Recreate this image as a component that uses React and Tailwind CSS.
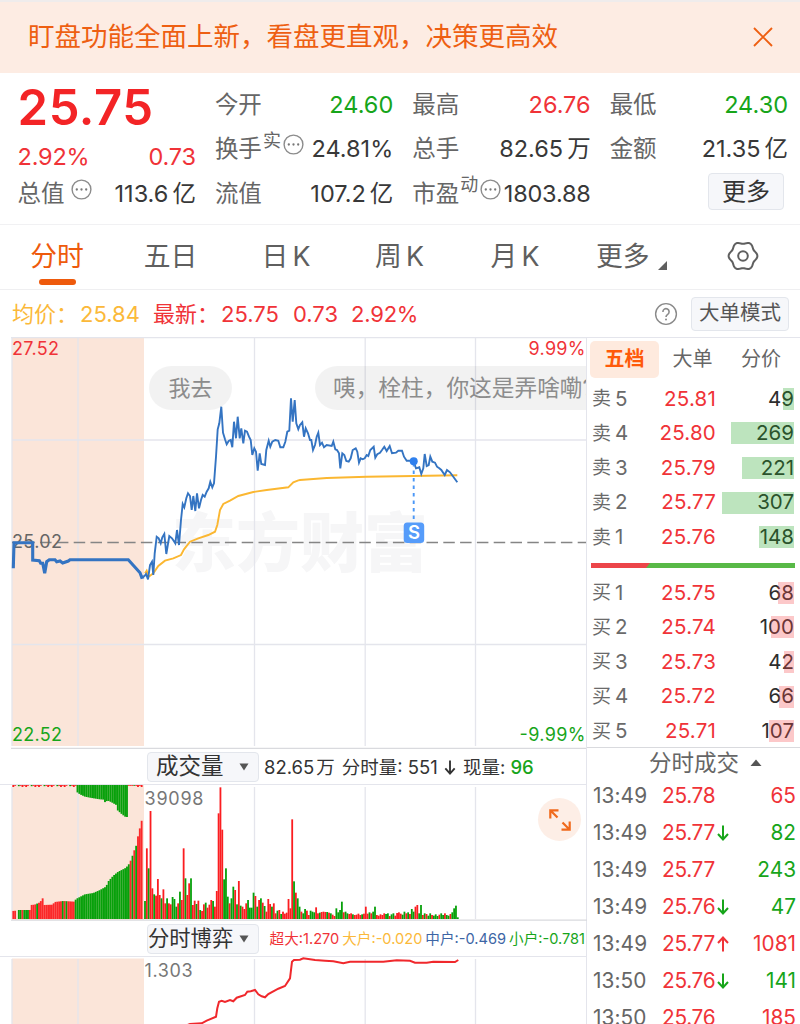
import React from "react";

const FONT = "font-['Inter','Noto_Sans_CJK_SC',sans-serif]";

/* ---------- chart data (chart-space pixels) ---------- */

const scale = (pts, ox, oy) => pts.map(([x, y]) => [ox + x / 3, oy + y / 3]);
const line = (pts) => pts.map(([x, y]) => `${x.toFixed(1)},${y.toFixed(1)}`).join(" ");

const auction = scale(
  [[40,415],[42,338],[98,338],[98,390],[118,392],[122,400],[128,400],[134,430],[140,395],[148,389],[165,389],[170,395],[180,393],[188,399],[205,393],[210,389],[385,389],[420,428],[425,442],[432,440]],
  0, 430
);

const price = [
  ...scale(
    [[432,440],[438,432],[444,448],[450,405],[456,395],[460,435],[464,370],[470,320],[476,325],[482,340],[487,322],[493,312],[499,372],[508,318],[516,325],[526,340],[531,300],[537,345],[543,270],[548,222],[553,232],[559,205],[564,190],[570,198],[575,240],[580,198],[586,243],[591,190],[597,235],[603,210],[608,195],[614,200],[620,185],[626,175],[631,155],[637,172],[642,160]],
    0, 430
  ),
  ...scale(
    [[48,200],[53,118],[58,100],[64,50],[69,128],[75,148],[80,163],[86,153],[92,150],[97,172],[102,95],[108,145],[113,80],[119,145],[124,115],[130,160],[135,122],[141,125],[147,140],[152,150],[157,195],[163,175],[168,185],[173,242],[179,190],[184,222],[195,225],[199,180],[206,152],[211,170],[217,155],[226,150],[235,152],[241,172],[250,172],[256,155],[262,125],[268,122],[273,25],[278,95],[284,30],[289,100],[295,118],[300,105],[307,97],[312,140],[317,115],[324,130],[330,150],[334,150],[339,180],[345,165],[350,140],[355,128],[360,165],[366,158],[372,172],[380,165],[395,168],[400,155],[406,178],[411,180],[417,190],[421,235],[427,190],[433,195],[439,213],[446,215],[452,205],[458,180],[467,175],[472,185],[477,218],[482,205],[488,208],[494,205],[500,195],[505,198],[511,180],[521,170],[526,203],[532,193],[540,188],[546,180],[553,170],[560,183],[569,168],[576,190],[588,188],[595,182],[606,182],[612,200],[620,212],[640,212],[648,235],[658,232],[664,252],[670,235],[674,192],[680,228],[686,225],[691,200],[697,215],[705,218],[711,230],[718,235],[724,240],[734,255],[741,240],[750,247],[760,260],[772,277]],
    200, 390
  ),
];

const average = [
  ...scale(
    [[435,430],[440,422],[446,440],[460,430],[475,408],[495,392],[520,385],[543,375],[552,358],[570,335],[595,325],[625,315],[645,305],[652,285],[660,240],[670,222],[690,212],[715,198],[760,186],[800,180],[865,172],[880,157],[895,151]],
    0, 430
  ),
  ...scale([[0,150],[80,144],[200,140],[340,138],[472,136]], 300, 430),
];

const game = [
  ...scale(
    [[560,826],[570,822],[605,820],[620,812],[648,800],[652,775],[657,755],[665,752],[675,756],[690,750],[700,754],[710,743],[735,735],[742,725],[752,724],[765,720],[775,733],[785,739],[795,742],[805,732],[835,716],[855,708],[870,685],[876,635],[882,630],[900,629]],
    0, 750
  ),
  ...scale([[10,625],[45,630],[75,632],[100,634],[130,640],[150,635],[250,635],[290,631],[330,632],[345,638],[380,638],[400,635],[465,636],[475,630]], 300, 750),
];

/* per-minute volume: bar height in thirds of a pixel plus direction */
const volume =
  "54G 212R 152G 324R 92R 74G 70R 120R 72R 62G 89R 47R 62G 47R 44R 66G 60G 37G 47R 82G 57R 212R 122G 72R 107R 122G 42R 55R 45G 55R 27G 24R 44R 49G 34R 43R 57R 54G 37R 84R 317R 395R 268R 119G 152G 67G 47R 62G 97G 87R 44G 114R 40G 37R 30R 47R 57G 34G 34G 79G 69R 37G 57R 62G 49R 39G 22R 60R 45R 37G 47R 17R 25G 27R 15G 22R 16R 19R 60R 32R 299R 113G 79R 62G 37G 22R 17G 30G 25R 12R 25G 22G 20G 35R 17R 19G 21R 22R 21R 21G 19R 17G 13R 9R 32G 20G 27G 52G 20R 22G 17G 15R 17R 14G 12R 13R 16R 12R 14G 16R 37R 16R 20G 17R 22G 37G 12R 10R 14R 12R 17R 15G 17G 9R 14G 17G 10R 18R 20R 16R 13G 22G 17R 20G 15R 30G 22G 37R 42R 17G 42G 12R 17G 15R 10G 17G 12R 10G 14G 9G 13R 17G 12G 17R 12G 10G 15R 20G 32G 40G 5G"
    .split(" ")
    .map((s) => [parseInt(s, 10) / 3, s.endsWith("R")]);

const lerp = (stops, x) => {
  for (let i = 1; i < stops.length; i++) {
    const [x0, y0] = stops[i - 1];
    const [x1, y1] = stops[i];
    if (x <= x1) return y0 + ((y1 - y0) * (x - x0)) / (x1 - x0);
  }
  return stops[stops.length - 1][1];
};
const lowerEnvelope = [[37,24],[49,25],[54,27],[90,27],[92,42],[104,43],[120,50],[128,62],[132,42],[158,43],[164,51],[190,54],[224,52],[228,60],[255,74],[280,78],[300,87],[318,97],[326,114],[340,130],[355,142],[375,152],[384,160],[390,170],[396,185],[402,204],[408,217],[414,248],[420,274],[427,303]];
const upperEnvelope = [[232,22],[240,28],[255,35],[275,39],[300,43],[313,44],[316,55],[322,46],[335,52],[349,60],[353,76],[365,87],[375,95],[381,96]];
const auctionBars = Array.from({ length: 71 }, (_, i) => {
  const x = 40 + i * 5.5;
  const red =
    x < 50 || (x > 54 && x < 90 && i % 4 === 1) || (x > 90 && x < 104) || (x > 104 && x < 122 && i % 2 === 0) ||
    (x >= 122 && x < 182) || (x >= 182 && x < 207 && i % 2 === 0) || (x >= 207 && x < 226) || (x > 381 && i % 2 === 0) || x > 416;
  return { x: x / 3, h: x > 49 && x < 54 ? 0 : lerp(lowerEnvelope, x) / 3, red };
});

const RED = "#fb1d20";
const GREEN = "#07a00a";

/* ---------- small pieces ---------- */

const Dots = () => (
  <svg className="size-[21px] shrink-0" viewBox="0 0 21 21">
    <circle cx="10.5" cy="10.5" r="9.4" fill="none" stroke="#8c8c8c" strokeWidth="1.4" />
    <circle cx="5.8" cy="10.5" r="1.15" fill="#777" />
    <circle cx="10.5" cy="10.5" r="1.15" fill="#777" />
    <circle cx="15.2" cy="10.5" r="1.15" fill="#777" />
  </svg>
);

function Stat({ label, sup, dots, value, unit, tone = "text-[#383838]" }) {
  return (
    <div className="flex h-[44.5px] items-center justify-between whitespace-nowrap">
      <span className="flex items-center text-[23.5px] text-[#666]">
        {label}
        {sup && <span className="mb-4 ml-px text-[18px] leading-none">{sup}</span>}
        {dots && <span className={sup ? "mb-2 ml-[2px]" : "mb-2 ml-[6px]"}><Dots /></span>}
      </span>
      <span className={`flex items-center text-[23.5px] ${tone}`}>
        {value}
        {unit && <span className="ml-[4px]">{unit}</span>}
      </span>
    </div>
  );
}

const gearPath =
  Array.from({ length: 72 }, (_, i) => {
    const a = (i * Math.PI) / 36;
    const r = 13.3 + 1.1 * Math.cos(6 * a);
    return `${i ? "L" : "M"}${(16 + r * Math.cos(a)).toFixed(2)} ${(16 + r * Math.sin(a)).toFixed(2)}`;
  }).join("") + "Z";

const sells = [["卖5", "25.81", 49], ["卖4", "25.80", 269], ["卖3", "25.79", 221], ["卖2", "25.77", 307], ["卖1", "25.76", 148]];
const buys = [["买1", "25.75", 68], ["买2", "25.74", 100], ["买3", "25.73", 42], ["买4", "25.72", 66], ["买5", "25.71", 107]];
const trades = [
  ["13:49", "25.78", "", "65", "r"],
  ["13:49", "25.77", "d", "82", "g"],
  ["13:49", "25.77", "", "243", "g"],
  ["13:49", "25.76", "d", "47", "g"],
  ["13:49", "25.77", "u", "1081", "r"],
  ["13:50", "25.76", "d", "141", "g"],
  ["13:50", "25.76", "", "185", "r"],
];

function Level({ row, bar }) {
  const [label, p, v] = row;
  return (
    <div className="flex h-[34.6px] items-center pl-[5px] pr-[6px] pt-px text-[20.5px] leading-none">
      <span className="flex w-[50px] items-center gap-[4px] text-[#6a6a6a]">
        <span className="text-[19px]">{label[0]}</span>
        {label[1]}
      </span>
      <span className="w-[74px] text-right tracking-[0.2px] text-[#f03338]">{p}</span>
      <span className="relative flex h-[22px] flex-1 items-center justify-end text-[#2e2e2e]">
        {v}
        <span className={`absolute right-0 top-0 h-full ${bar}`} style={{ width: v * 0.235 }} />
      </span>
    </div>
  );
}

function Arrow({ up, className }) {
  return (
    <svg className={className} viewBox="0 0 12 16" fill="none" stroke="currentColor" strokeWidth="2">
      <path d={up ? "M6 15.5V1.5M1 7L6 1.5L11 7" : "M6 0.5V14.5M1 9L6 14.5L11 9"} />
    </svg>
  );
}

function Picker({ children, className }) {
  return (
    <div className={`flex h-[30px] w-[112px] shrink-0 items-center justify-between rounded-[4px] border border-[#e3e6ec] bg-[#f6f7fa] pr-[9px] leading-none text-[#333] ${className}`}>
      <span className="whitespace-nowrap">{children}</span>
      <svg className="h-[8px] w-[10px] shrink-0" viewBox="0 0 10 8"><path d="M0.5 0.5H9.5L5 7.5Z" fill="#555" /></svg>
    </div>
  );
}

const Verticals = ({ y1, y2 }) => (
  <g stroke="#e4e5ec" strokeWidth="1.3">
    {[12, 78, 254.5, 365.2, 475.5].map((x) => <line key={x} x1={x} x2={x} y1={y1} y2={y2} />)}
  </g>
);

/* ---------- page ---------- */

function PriceChart() {
  return (
    <div className="relative h-[412px] overflow-hidden">
      <svg className="block h-[412px] w-[587px]" viewBox="0 337 587 412">
        <rect x="12" y="338" width="132" height="408" fill="#fbe5d9" />
        <text x="172" y="566" fontSize="64" fontWeight="900" fill="#f6f6f7" fontFamily="Noto Sans CJK SC, sans-serif">东方财富</text>
        <Verticals y1={338} y2={746} />
        <g stroke="#e4e5ec" strokeWidth="1.3">
          <line x1="11" x2="587" y1="337.5" y2="337.5" />
          <line x1="12" x2="586" y1="440" y2="440" />
          <line x1="12" x2="586" y1="644.5" y2="644.5" />
        </g>
        <line x1="11" x2="587" y1="748.3" y2="748.3" stroke="#d9dade" strokeWidth="1.3" />
        <line x1="12" x2="586" y1="542.5" y2="542.5" stroke="#858585" strokeWidth="1.3" strokeDasharray="11.5 5.3" strokeDashoffset="5.5" />
        <g fontFamily="Inter, sans-serif" fontSize="18">
          <text x="12" y="354.5" fill="#f03338" textLength="47">27.52</text>
          <text x="12" y="548" fill="#666" textLength="50">25.02</text>
          <text x="12" y="741" fill="#17a51a" textLength="50">22.52</text>
          <text x="585.5" y="354.5" fill="#f03338" textAnchor="end" textLength="57">9.99%</text>
          <text x="585.5" y="741" fill="#17a51a" textAnchor="end" textLength="66">-9.99%</text>
        </g>
        <polyline points={line(average)} fill="none" stroke="#fbb731" strokeWidth="1.9" />
        <polyline points={line(auction)} fill="none" stroke="#3474c2" strokeWidth="3.1" />
        <polyline points={line(price)} fill="none" stroke="#3474c2" strokeWidth="1.9" />
        <line x1="413.7" x2="413.7" y1="463" y2="522" stroke="#4a97f7" strokeWidth="1.9" strokeDasharray="3.5 4" />
        <circle cx="413.7" cy="461.3" r="4" fill="#2f80ee" />
        <rect x="403.7" y="522.5" width="20.5" height="20.5" rx="3.5" fill="#569cfa" />
        <text x="413.9" y="539.4" fontFamily="Inter, sans-serif" fontSize="18.5" fontWeight="600" fill="#fff" textAnchor="middle">S</text>
      </svg>
      <div className="absolute left-[149px] top-[29px] flex h-[44px] w-[83px] items-center justify-center rounded-full bg-black/5 text-[22px] text-[#8c8c8c]">我去</div>
      <div className="absolute left-[315px] top-[29px] flex h-[44px] w-[320px] items-center whitespace-nowrap rounded-full bg-black/5 pl-[18px] text-[22.7px] text-[#8c8c8c]">咦，栓柱，你这是弄啥嘞?</div>
    </div>
  );
}

function VolumeChart() {
  return (
    <div className="relative h-[136px]">
      <svg className="block h-[136px] w-[587px]" viewBox="0 785 587 136">
        <rect x="12" y="785" width="132" height="135" fill="#fbe5d9" />
        <Verticals y1={787} y2={919} />
        {auctionBars.map((b) => (
          <rect key={b.x} x={b.x - 0.95} y={919 - b.h} width="1.86" height={b.h} fill={b.red ? RED : GREEN} fillOpacity={b.red ? 0.95 : 1} />
        ))}
        {auctionBars.map((b, i) => {
          const cx = b.x * 3;
          if (cx >= 232 && cx <= 383) return <rect key={i} x={b.x - 0.95} y="785" width="1.86" height={lerp(upperEnvelope, cx) / 3} fill={GREEN} />;
          const h = [2, 0.8, 0, 1.2, 0.8, 2, 0.8][i % 7];
          return <rect key={i} x={b.x - 0.95} y="785" width="1.86" height={cx > 383 && cx < 412 ? 0.8 : h} fill={i % 7 === 3 ? GREEN : RED} />;
        })}
        {volume.map(([h, red], i) => (
          <rect key={i} x={144.1 + i * 1.84} y={919 - h} width="1.8" height={h} fill={red ? RED : GREEN} />
        ))}
        <line x1="11" x2="587" y1="920.2" y2="920.2" stroke="#d9dade" strokeWidth="1.3" />
        <text x="144.5" y="805" fontFamily="Inter, sans-serif" fontSize="18" fill="#777" textLength="59">39098</text>
      </svg>
      <div className="absolute left-[538px] top-[13px] flex size-[43px] items-center justify-center rounded-full bg-[#fdeee6]">
        <svg className="size-[24px]" viewBox="0 0 24 24" fill="none" stroke="#f06a1d" strokeWidth="2.2">
          <path d="M10.5 2.3H2.3V10.5M2.3 2.3L9.5 9.5M13.5 21.7H21.7V13.5M21.7 21.7L14.5 14.5" />
        </svg>
      </div>
    </div>
  );
}

export default function App() {
  return (
    <div className={`flex h-[1024px] w-[800px] flex-col overflow-hidden bg-white ${FONT}`}>
      <div className="flex h-[73px] shrink-0 items-center justify-between border-t-2 border-[#efecec] bg-[#fdece3] pb-[2px] pl-[28px] pr-[27px] text-[#ee5f12]">
        <span className="text-[26.5px] leading-none">盯盘功能全面上新，看盘更直观，决策更高效</span>
        <svg className="size-[20px]" viewBox="0 0 20 20" fill="none" stroke="currentColor" strokeWidth="1.9"><path d="M1 1L19 19M19 1L1 19" /></svg>
      </div>

      <div className="grid h-[152px] shrink-0 grid-cols-4 gap-x-[19px] border-b border-[#f1f1f3] pl-[17.5px] pr-[12px] pt-[9px]">
        <div className="flex flex-col">
          <div className="flex h-[51px] items-center text-[49px] font-semibold leading-none tracking-[0.6px] text-[#f32426]">25.75</div>
          <div className="flex h-[38px] items-center justify-between pt-[9px] text-[23.5px] leading-none tracking-[-0.2px] text-[#f03338]">
            <span>2.92%</span>
            <span>0.73</span>
          </div>
          <Stat label="总值" dots value="113.6" unit="亿" />
        </div>
        <div>
          <Stat label="今开" value="24.60" tone="text-[#17a51a]" />
          <Stat label="换手" sup="实" dots value="24.81%" />
          <Stat label="流值" value="107.2" unit="亿" />
        </div>
        <div>
          <Stat label="最高" value="26.76" tone="text-[#f03338]" />
          <Stat label="总手" value="82.65" unit="万" />
          <Stat label="市盈" sup="动" dots value={<span className="tracking-[-0.2px]">1803.88</span>} />
        </div>
        <div>
          <Stat label="最低" value="24.30" tone="text-[#17a51a]" />
          <Stat label="金额" value="21.35" unit="亿" />
          <div className="ml-auto mr-[4px] mt-[2px] flex h-[37px] w-[76px] items-center justify-center rounded-[4px] border border-[#e3e6ec] bg-[#f6f7fa] text-[24px] leading-none text-[#333]">更多</div>
        </div>
      </div>

      <div className="flex h-[65px] shrink-0 border-b border-[#efeff1] text-[26.8px] leading-none text-[#5f5f5f]">
        <div className="flex w-[114px] flex-col items-center pt-[18px] text-[#ee5a0c]">
          分时
          <span className="mt-[9px] h-[6px] w-[37px] rounded-full bg-[#ee5a0c]" />
        </div>
        <div className="w-[113px] pt-[18px] text-center">五日</div>
        <div className="w-[118px] pt-[18px] text-center">日<span className="ml-[4px]">K</span></div>
        <div className="w-[109px] pt-[18px] text-center">周<span className="ml-[4px]">K</span></div>
        <div className="w-[122px] pt-[18px] text-center">月<span className="ml-[4px]">K</span></div>
        <div className="flex w-[111px] pl-[20px] pt-[18px]">
          更多
          <svg className="ml-[8px] mt-[18px] size-[9px]" viewBox="0 0 9 9"><path d="M9 0V9H0Z" fill="#5f5f5f" /></svg>
        </div>
        <div className="flex w-[111px] justify-center pt-[15px]">
          <svg className="size-[32px]" viewBox="0 0 32 32" fill="none" stroke="#5f5f5f" strokeWidth="2">
            <path d={gearPath} />
            <circle cx="16" cy="16" r="4.8" />
          </svg>
        </div>
      </div>

      <div className="flex h-[47px] shrink-0 items-center pl-[12px] pr-[11px] text-[22px] leading-none text-[#f03338]">
        <span className="flex w-[141px] whitespace-nowrap text-[#fbb93a]">均价：<span className="ml-[2px]">25.84</span></span>
        <span className="flex w-[140px] whitespace-nowrap">最新：<span className="ml-[2px]">25.75</span></span>
        <span className="w-[58px]">0.73</span>
        <span className="tracking-[-0.2px]">2.92%</span>
        <svg className="ml-auto size-[24px]" viewBox="0 0 24 24" fill="none" stroke="#8a8a8a" strokeWidth="1.4">
          <circle cx="12" cy="12" r="10.4" />
          <path d="M8.9 9.9A3.1 3.1 0 1 1 13.7 12.4C12.5 13.2 12 13.6 12 15" strokeWidth="1.6" />
          <circle cx="12" cy="17.5" r="1" fill="#8a8a8a" stroke="none" />
        </svg>
        <span className="ml-[13px] flex h-[34px] w-[98px] items-center justify-center rounded-[4px] border border-[#e3e6ec] bg-[#f6f7fa] text-[20.5px] text-[#555]">大单模式</span>
      </div>

      <div className="flex flex-1">
        <div className="w-[587px] shrink-0 border-r border-[#e4e5ec]">
          <PriceChart />
          <div className="flex h-[36px] items-center border-b border-[#e4e5ec] pl-[147px] text-[18.5px] leading-none text-[#333]">
            <Picker className="pl-[8px] text-[22.5px]">成交量</Picker>
            <span className="ml-[5px] flex items-center whitespace-nowrap pt-[2px]">82.65<span className="ml-[2px]">万</span></span>
            <span className="ml-[7px] whitespace-nowrap pt-[2px]">分时量: 551</span>
            <Arrow className="ml-[6px] mt-px h-[15px] w-[12px]" />
            <span className="ml-[7px] whitespace-nowrap pt-[2px]">现量: <span className="font-medium text-[#17a51a]">96</span></span>
          </div>
          <VolumeChart />
          <div className="flex h-[36px] items-center justify-between border-b border-[#e4e5ec] pl-[147px] pr-[1px] text-[14.6px] leading-none">
            <Picker className="text-[21.3px]">分时博弈</Picker>
            <div className="flex items-center gap-[3px] whitespace-nowrap pt-px">
              <span className="text-[#f03338]">超大:1.270</span>
              <span className="text-[#fbb93a]">大户:-0.020</span>
              <span className="text-[#3d65a5]">中户:-0.469</span>
              <span className="text-[#17a51a]">小户:-0.781</span>
            </div>
          </div>
          <svg className="block h-[67px] w-[587px]" viewBox="0 957 587 67">
            <rect x="12" y="958.5" width="132" height="66" fill="#fbe5d9" />
            <Verticals y1={959} y2={1024} />
            <polyline points={line(game)} fill="none" stroke="#f0282c" strokeWidth="2" />
            <text x="144.5" y="976.5" fontFamily="Inter, sans-serif" fontSize="18" fill="#777" textLength="48">1.303</text>
          </svg>
        </div>

        <div className="flex flex-1 flex-col">
          <div className="flex h-[44px] shrink-0 items-start border-t border-[#e4e5ec] pl-[3px] pt-[3px] text-[20px] leading-none text-[#666]">
            <span className="flex h-[37px] w-[69px] items-center justify-center rounded-[5px] bg-[#feeade] pb-px font-bold text-[#ff5a0a]">五档</span>
            <span className="flex h-[37px] w-[67px] items-center justify-center pb-px">大单</span>
            <span className="flex h-[37px] w-[70px] items-center justify-center pb-px">分价</span>
          </div>
          {sells.map((r) => <Level key={r[0]} row={r} bar="bg-[#25a528]/30" />)}
          <div className="mb-[7px] ml-[4px] mr-[5px] mt-[9px] flex h-[5px] shrink-0">
            <svg className="h-[5px] w-full" viewBox="0 0 204 5" preserveAspectRatio="none">
              <rect width="204" height="5" fill="#58b947" />
              <path d="M0 0H59L55 5H0Z" fill="#ec4549" />
            </svg>
          </div>
          {buys.map((r) => <Level key={r[0]} row={r} bar="bg-[#f5484c]/30" />)}
          <div className="mt-[-1px] flex h-[31px] shrink-0 items-center justify-center gap-[11px] border-t border-[#d9dade] pl-[24px] text-[22.5px] leading-none text-[#666]">
            分时成交
            <svg className="h-[7px] w-[12px]" viewBox="0 0 12 7"><path d="M0.5 7L6 0.5L11.5 7Z" fill="#555" /></svg>
          </div>
          {trades.map(([t, p, dir, v, c], i) => (
            <div key={i} className="flex h-[37px] shrink-0 items-center pl-[6px] pr-[4px] text-[20.8px] leading-none">
              <span className="w-[69px] tracking-[0.1px] text-[#666]">{t}</span>
              <span className="w-[56px] tracking-[-0.3px] text-[#f03338]">{p}</span>
              {dir && <Arrow up={dir === "u"} className={`-ml-px h-[16px] w-[12px] ${dir === "u" ? "text-[#f03338]" : "text-[#17a51a]"}`} />}
              <span className={`ml-auto ${c === "r" ? "text-[#f03338]" : "text-[#17a51a]"}`}>{v}</span>
            </div>
          ))}
        </div>
      </div>
    </div>
  );
}
